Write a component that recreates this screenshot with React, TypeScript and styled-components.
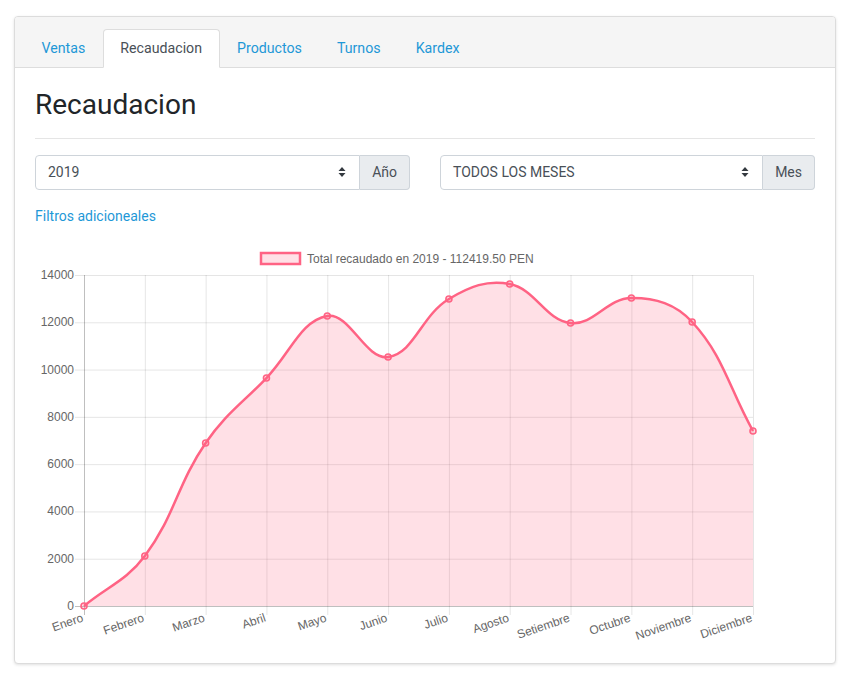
import React from 'react';
import styled, { createGlobalStyle } from 'styled-components';

const GlobalStyle = createGlobalStyle`
  html, body { margin: 0; padding: 0; background: #fff; }
  body { font-family: Roboto, "Liberation Sans", sans-serif; line-height: 1.5; }
  *, *::before, *::after { box-sizing: border-box; }
`;

const Page = styled.div`
  padding: 16px 15px 16px 14px;
`;

const Card = styled.div`
  border: 1px solid #dcdcdc;
  border-radius: 4px;
  background: #fff;
  box-shadow: 0 1px 3px rgba(0, 0, 0, 0.12);
  overflow: hidden;
`;

const CardHeader = styled.div`
  background: #f5f5f5;
  border-bottom: 1px solid #ddd;
  padding: 12px 9px 0;
`;

const Tabs = styled.ul`
  display: flex;
  list-style: none;
  margin: 0 0 -1px;
  padding: 0;
`;

const Tab = styled.li<{ $active?: boolean }>`
  height: 39px;
  padding: 0 16.5px;
  display: flex;
  align-items: center;
  font-size: 14.2px;
  color: ${(p) => (p.$active ? '#495057' : '#1e98d7')};
  background: ${(p) => (p.$active ? '#fff' : 'transparent')};
  border: 1px solid ${(p) => (p.$active ? '#ddd' : 'transparent')};
  border-bottom-color: ${(p) => (p.$active ? '#fff' : 'transparent')};
  border-radius: 4px 4px 0 0;
  cursor: pointer;
`;

const CardBody = styled.div`
  padding: 20px;
`;

const Title = styled.h3`
  font-size: 28px;
  font-weight: 400;
  line-height: 1.2;
  margin: 0 0 8px;
  color: #212529;
`;

const Divider = styled.hr`
  border: 0;
  border-top: 1px solid rgba(0, 0, 0, 0.1);
  margin: 16px 0;
`;

const FilterRow = styled.div`
  display: grid;
  grid-template-columns: 1fr 1fr;
  column-gap: 30px;
`;

const InputGroup = styled.div`
  display: flex;
  height: 35px;
  font-size: 14px;
  color: #495057;
`;

const SelectBox = styled.div`
  flex: 1;
  display: flex;
  align-items: center;
  justify-content: space-between;
  padding: 0 13px 0 12px;
  border: 1px solid #ced4da;
  border-radius: 4px 0 0 4px;
  background: #fff;
`;

const Addon = styled.div`
  display: flex;
  align-items: center;
  padding: 0 12px;
  background: #e9ecef;
  border: 1px solid #ced4da;
  border-left: 0;
  border-radius: 0 4px 4px 0;
`;

const LinkText = styled.a`
  display: inline-block;
  margin-top: 16px;
  font-size: 14px;
  line-height: 21px;
  color: #1e98d7;
  text-decoration: none;
`;

const ChartSvg = styled.svg`
  display: block;
  margin-top: 8px;
`;

const ChartText = styled.text`
  font-family: "Liberation Sans", Arial, sans-serif;
  font-size: 12px;
  fill: #666;
`;

const Chevrons = () => (
  <svg width="8" height="10" viewBox="0 0 8 10">
    <path d="M4 0 L0.5 4 H7.5 Z M4 10 L0.5 6 H7.5 Z" fill="#343a40" />
  </svg>
);

const months = [
  'Enero', 'Febrero', 'Marzo', 'Abril', 'Mayo', 'Junio',
  'Julio', 'Agosto', 'Setiembre', 'Octubre', 'Noviembre', 'Diciembre',
];
const values = [0, 2115, 6894, 9643, 12266, 10532, 12985, 13619, 11970, 13027, 12012, 7402];

const X0 = 49;
const X1 = 718;
const Y0 = 39;
const Y1 = 370;
const MAX = 14000;

type Pt = { x: number; y: number };

function buildPaths() {
  const step = (X1 - X0) / (values.length - 1);
  const pts: Pt[] = values.map((v, i) => ({ x: X0 + i * step, y: Y1 - (v / MAX) * (Y1 - Y0) }));
  const t = 0.4;
  const clampY = (y: number) => Math.max(Y0, Math.min(Y1, y));
  const cps = pts.map((p, i) => {
    const prev = pts[i - 1] || p;
    const next = pts[i + 1] || p;
    const d01 = Math.hypot(p.x - prev.x, p.y - prev.y);
    const d12 = Math.hypot(next.x - p.x, next.y - p.y);
    let s01 = d01 / (d01 + d12);
    let s12 = d12 / (d01 + d12);
    if (isNaN(s01)) s01 = 0;
    if (isNaN(s12)) s12 = 0;
    const fa = t * s01;
    const fb = t * s12;
    return {
      prev: { x: p.x - fa * (next.x - prev.x), y: clampY(p.y - fa * (next.y - prev.y)) },
      next: { x: p.x + fb * (next.x - prev.x), y: clampY(p.y + fb * (next.y - prev.y)) },
    };
  });
  let d = `M${pts[0].x},${pts[0].y}`;
  for (let i = 1; i < pts.length; i++) {
    d += ` C${cps[i - 1].next.x},${cps[i - 1].next.y} ${cps[i].prev.x},${cps[i].prev.y} ${pts[i].x},${pts[i].y}`;
  }
  const area = `${d} L${pts[pts.length - 1].x},${Y1} L${pts[0].x},${Y1} Z`;
  return { pts, line: d, area, step };
}

const Chart = () => {
  const { pts, line, area, step } = buildPaths();
  const yTicks = [0, 2000, 4000, 6000, 8000, 10000, 12000, 14000];
  const yOf = (v: number) => Y1 - (v / MAX) * (Y1 - Y0);
  return (
    <ChartSvg width="780" height="407" viewBox="0 0 780 407">
      <rect x="226" y="17" width="39" height="11" fill="rgba(255,99,132,0.2)" stroke="rgb(255,99,132)" strokeWidth="2.5" />
      <ChartText x="272" y="26.5">Total recaudado en 2019 - 112419.50 PEN</ChartText>

      {yTicks.map((v) => (
        <line
          key={v}
          x1={X0 - 9}
          x2={X1}
          y1={yOf(v) + 0.5}
          y2={yOf(v) + 0.5}
          stroke={v === 0 ? 'rgba(0,0,0,0.25)' : 'rgba(0,0,0,0.1)'}
          strokeWidth="1"
        />
      ))}
      {months.map((m, i) => (
        <line
          key={m}
          x1={X0 + i * step + 0.5}
          x2={X0 + i * step + 0.5}
          y1={Y0}
          y2={Y1 + 9}
          stroke={i === 0 ? 'rgba(0,0,0,0.25)' : 'rgba(0,0,0,0.1)'}
          strokeWidth="1"
        />
      ))}

      <path d={area} fill="rgba(255,99,132,0.2)" />
      <path d={line} fill="none" stroke="rgb(255,99,132)" strokeWidth="2.5" />
      {pts.map((p, i) => (
        <circle key={i} cx={p.x} cy={p.y} r="3" fill="rgba(255,99,132,0.2)" stroke="rgb(255,99,132)" strokeWidth="1.6" />
      ))}

      {yTicks.map((v) => (
        <ChartText key={v} x={X0 - 10} y={yOf(v) + 4} textAnchor="end">
          {v}
        </ChartText>
      ))}
      {months.map((m, i) => (
        <ChartText
          key={m}
          textAnchor="end"
          transform={`translate(${X0 + i * step},${Y1 + 15}) rotate(-19)`}
        >
          {m}
        </ChartText>
      ))}
    </ChartSvg>
  );
};

const tabs = ['Ventas', 'Recaudacion', 'Productos', 'Turnos', 'Kardex'];

export default function App() {
  return (
    <Page>
      <GlobalStyle />
      <Card>
        <CardHeader>
          <Tabs>
            {tabs.map((t) => (
              <Tab key={t} $active={t === 'Recaudacion'}>
                {t}
              </Tab>
            ))}
          </Tabs>
        </CardHeader>
        <CardBody>
          <Title>Recaudacion</Title>
          <Divider />
          <FilterRow>
            <InputGroup>
              <SelectBox>
                <span>2019</span>
                <Chevrons />
              </SelectBox>
              <Addon>Año</Addon>
            </InputGroup>
            <InputGroup>
              <SelectBox>
                <span>TODOS LOS MESES</span>
                <Chevrons />
              </SelectBox>
              <Addon>Mes</Addon>
            </InputGroup>
          </FilterRow>
          <LinkText href="#">Filtros adicioneales</LinkText>
          <Chart />
        </CardBody>
      </Card>
    </Page>
  );
}
